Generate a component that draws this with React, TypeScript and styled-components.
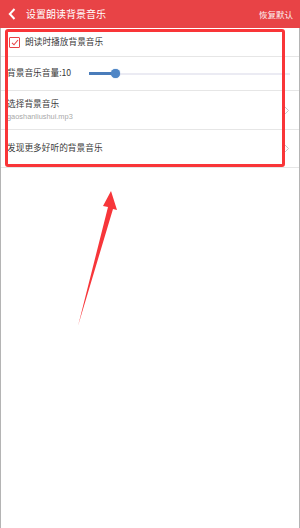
import React from "react";
import styled, { createGlobalStyle } from "styled-components";

const Global = createGlobalStyle`
  html, body { margin: 0; padding: 0; background: #fff; }
  body { font-family: "Noto Sans CJK SC", "Noto Sans", sans-serif; }
`;

const Page = styled.div`
  position: relative;
  width: 300px;
  height: 528px;
  overflow: hidden;
  background: #fff;
`;

const Header = styled.div`
  height: 28px;
  background: #e84346;
  display: flex;
  align-items: center;
  color: #fff;
  padding: 0 7px 0 8px;
  box-sizing: border-box;
`;

const Title = styled.div`
  font-size: 10px;
  margin-left: 10px;
  flex: 1;
  line-height: 1;
`;

const Action = styled.div`
  font-size: 8.5px;
  line-height: 1;
  opacity: 0.92;
`;

const Body = styled.div`
  height: 500px;
  border-left: 1px solid #b4b4b4;
  border-right: 1px solid #b4b4b4;
  box-sizing: border-box;
`;

const Row = styled.div<{ $h: number }>`
  height: ${(p) => p.$h}px;
  display: flex;
  align-items: center;
  border-bottom: 1px solid #e6e6e6;
  padding: 0 9px 0 6px;
  box-sizing: border-box;
`;

const Label = styled.div`
  font-size: 8.7px;
  color: #3a3a3a;
  line-height: 1;
`;

const Col = styled.div`
  flex: 1;
  display: flex;
  flex-direction: column;
  gap: 4px;
`;

const Sub = styled.div`
  font-family: "Liberation Sans", Arial, sans-serif;
  font-size: 7.4px;
  color: #a8a8a8;
  line-height: 1;
`;

const Check = styled.div`
  width: 9px;
  height: 9px;
  border: 1px solid #e84346;
  border-radius: 1px;
  margin: 0 5px 0 2px;
  display: flex;
  align-items: center;
  justify-content: center;
`;

const Slider = styled.div`
  flex: 1;
  margin-left: 18px;
  height: 2px;
  background: #ebebf3;
  position: relative;
  display: flex;
  align-items: center;
`;

const Fill = styled.div`
  height: 3px;
  background: #4a7cba;
`;

const Thumb = styled.div`
  width: 9px;
  height: 9px;
  border-radius: 50%;
  background: #4f86c6;
  margin-left: -4px;
  box-shadow: 0 0 1px #4f86c6;
`;

const Box = styled.div`
  position: absolute;
  left: 5px;
  top: 29px;
  width: 280px;
  height: 138px;
  border: 3px solid #f93538;
  border-radius: 3px;
  box-sizing: border-box;
  pointer-events: none;
`;

const ArrowSvg = styled.svg`
  position: absolute;
  left: 0;
  top: 0;
  pointer-events: none;
`;

const Chevron = () => (
  <svg width="6" height="9" viewBox="0 0 6 9">
    <path d="M1 1 L4.5 4.5 L1 8" fill="none" stroke="#c8c8c8" strokeWidth="1" />
  </svg>
);

export default function App() {
  return (
    <>
      <Global />
      <Page>
        <Header>
          <svg width="8" height="12" viewBox="0 0 8 12">
            <path d="M6.5 1 L1.8 6 L6.5 11" fill="none" stroke="#fff" strokeWidth="2" />
          </svg>
          <Title>设置朗读背景音乐</Title>
          <Action>恢复默认</Action>
        </Header>
        <Body>
          <Row $h={29}>
            <Check>
              <svg width="8" height="7" viewBox="0 0 8 7">
                <path d="M1 3.8 L3 5.8 L7 1" fill="none" stroke="#e84346" strokeWidth="1.1" />
              </svg>
            </Check>
            <Label>朗读时播放背景音乐</Label>
          </Row>
          <Row $h={34}>
            <Label>背景音乐音量:10</Label>
            <Slider>
              <Fill style={{ width: "26px" }} />
              <Thumb />
            </Slider>
          </Row>
          <Row $h={39}>
            <Col>
              <Label>选择背景音乐</Label>
              <Sub>gaoshanliushui.mp3</Sub>
            </Col>
            <Chevron />
          </Row>
          <Row $h={38}>
            <Col>
              <Label>发现更多好听的背景音乐</Label>
            </Col>
            <Chevron />
          </Row>
        </Body>
        <Box />
        <ArrowSvg width="300" height="528" viewBox="0 0 300 528">
          <polygon points="111,191 117,210 113,209 78,326 108,207 103,206" fill="#f7363a" />
        </ArrowSvg>
      </Page>
    </>
  );
}
